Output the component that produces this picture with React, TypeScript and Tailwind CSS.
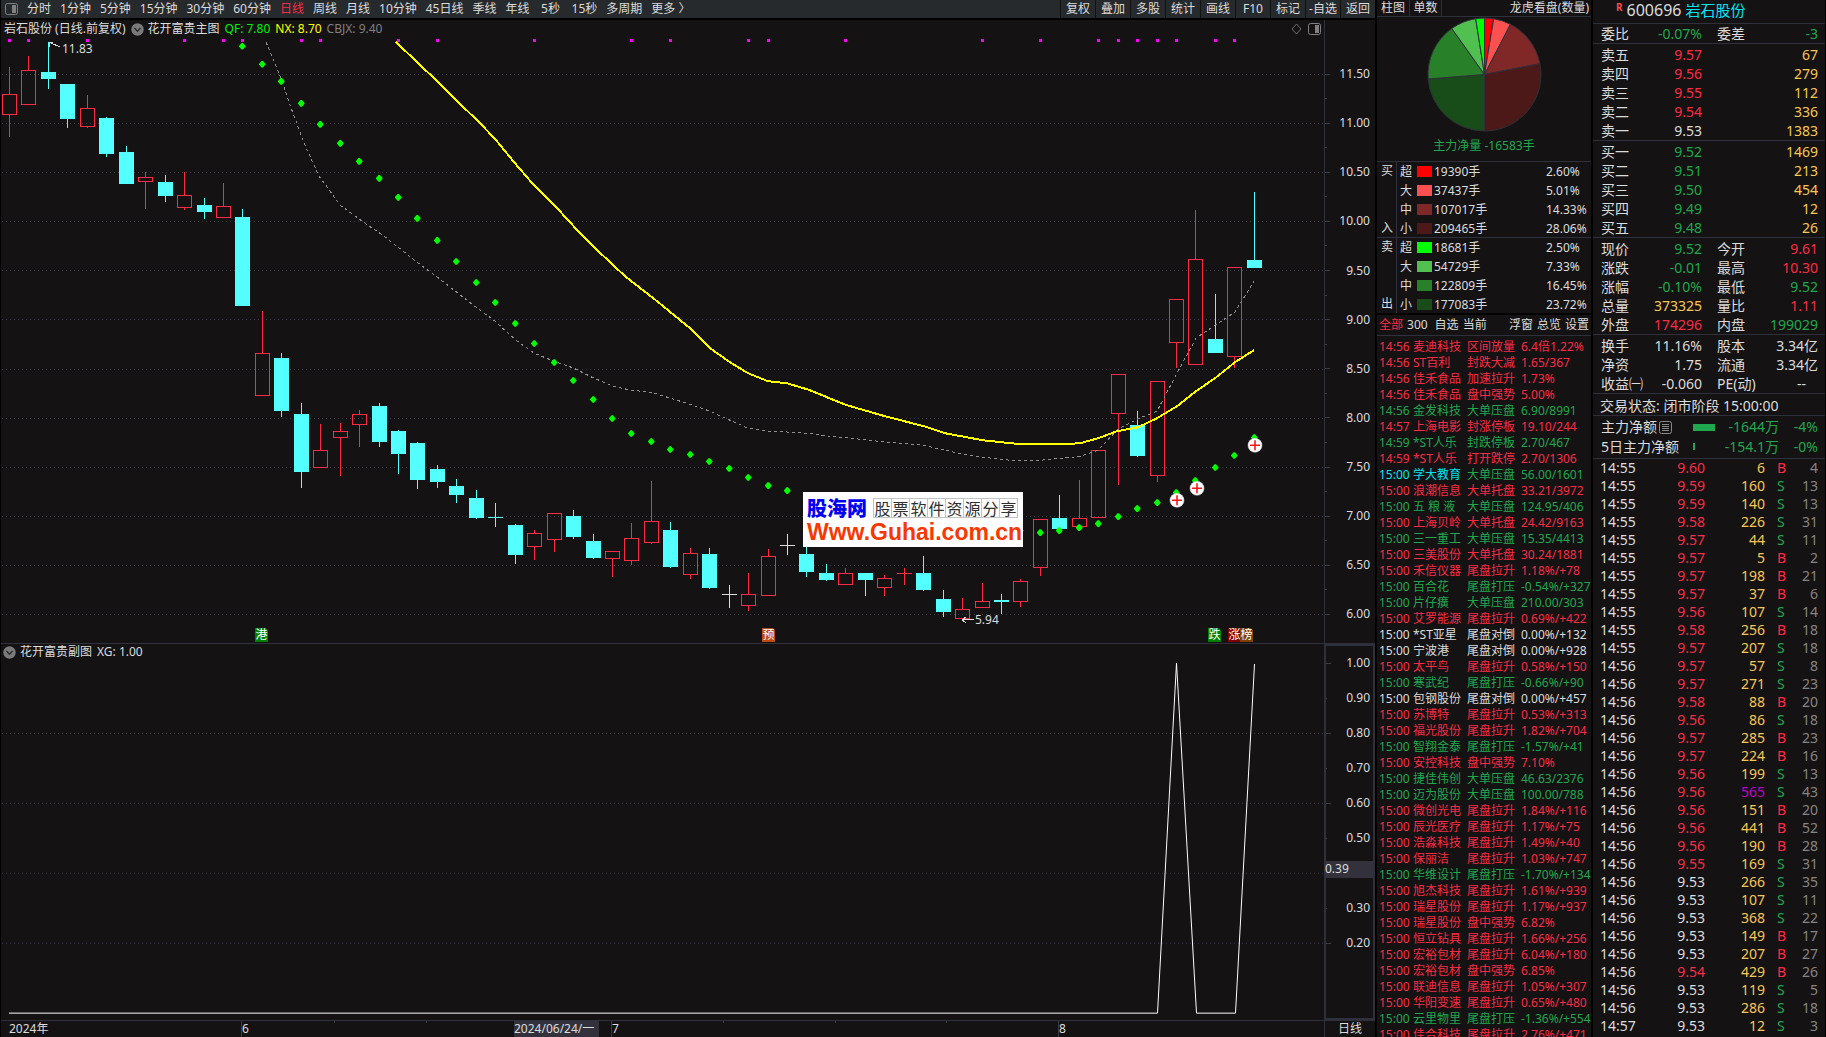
import { useState } from "react";
import { clsx } from "clsx";

type Tone = "r" | "g" | "w" | "y" | "c" | "m" | "n";

const TONES: Record<Tone, string> = {
  r: "text-[#fb2b46]",
  g: "text-[#1fa84f]",
  w: "text-[#dcdcdc]",
  y: "text-[#f8c850]",
  c: "text-[#00e4f4]",
  m: "text-[#c000c0]",
  n: "text-[#858585]",
};

const PERIODS = [
  "分时", "1分钟", "5分钟", "15分钟", "30分钟", "60分钟", "日线", "周线", "月线",
  "10分钟", "45日线", "季线", "年线", "5秒", "15秒", "多周期", "更多 〉",
];

const TOOLS = ["复权", "叠加", "多股", "统计", "画线", "F10", "标记", "-自选", "返回"];

// kind, high, body top, body bottom, low
type Candle = ["u" | "d" | "f", number, number, number, number];

const CANDLES: Candle[] = [
  ["u", 67, 94, 115, 137], ["u", 56, 70, 105, 105], ["d", 42, 72, 79, 89], ["d", 84, 84, 119, 128],
  ["u", 95, 108, 127, 128], ["d", 117, 118, 154, 157], ["d", 146, 152, 184, 184], ["u", 172, 177, 182, 209],
  ["d", 175, 182, 196, 202], ["u", 172, 195, 208, 210], ["d", 198, 205, 212, 219], ["u", 183, 206, 218, 218],
  ["d", 209, 217, 306, 306], ["u", 311, 353, 396, 396], ["d", 353, 358, 411, 417], ["d", 403, 414, 472, 488],
  ["u", 424, 450, 468, 468], ["u", 423, 431, 438, 476], ["u", 410, 414, 425, 447], ["d", 403, 406, 442, 447],
  ["d", 430, 431, 454, 474], ["d", 442, 443, 480, 489], ["d", 465, 469, 482, 488], ["d", 479, 486, 495, 503],
  ["d", 490, 498, 518, 519], ["d", 503, 517, 518, 527], ["d", 524, 525, 555, 564], ["u", 530, 533, 547, 560],
  ["u", 513, 513, 540, 552], ["d", 510, 516, 537, 539], ["d", 534, 541, 558, 559], ["u", 551, 551, 559, 577],
  ["u", 523, 538, 561, 565], ["u", 481, 521, 543, 544], ["d", 522, 530, 567, 568], ["u", 548, 553, 575, 579],
  ["d", 548, 554, 588, 589], ["f", 585, 594, 595, 608], ["u", 573, 594, 606, 611], ["u", 549, 556, 596, 596],
  ["f", 534, 545, 546, 555], ["d", 546, 554, 572, 577], ["d", 564, 573, 580, 581], ["u", 568, 573, 585, 585],
  ["d", 573, 573, 580, 596], ["u", 575, 578, 588, 596], ["u", 568, 573, 574, 585], ["d", 556, 573, 590, 591],
  ["d", 590, 599, 612, 617], ["u", 598, 609, 619, 619], ["u", 583, 601, 608, 608], ["d", 594, 600, 602, 614],
  ["u", 579, 581, 602, 607], ["u", 519, 519, 568, 576], ["d", 495, 518, 529, 529], ["u", 480, 518, 527, 527],
  ["u", 450, 450, 518, 518], ["u", 374, 374, 414, 485], ["d", 411, 425, 456, 457], ["u", 381, 381, 476, 482],
  ["u", 299, 299, 343, 368], ["u", 210, 259, 365, 365], ["d", 294, 339, 353, 353], ["u", 267, 267, 357, 368],
  ["d", 192, 260, 268, 268],
];

const SIGNALS = [0, 1, 4, 9, 11, 12, 15, 16, 20, 22, 27, 32, 34, 38, 39, 43, 50, 53, 56, 57, 58, 59, 60, 62, 63];

// QF dots, the first one sits on bar 12
const QF = [
  46, 64, 81, 103, 124, 143, 161, 178, 197, 218, 240, 261, 282, 302, 323, 343, 362, 380, 399, 418, 433, 441,
  449, 454, 461, 468, 477, 485, 490, 496, 501, 506, 511, 516, 520, 523, 526, 528, 529, 530, 530, 532, 530,
  527, 523, 516, 508, 502, 492, 480, 467, 455, 437,
];

const NX =
  "396,42 419,64 436,80 456,100 480,123 496,140 514,162 533,184 558,209 580,233 594,247 625,276 657,301 690,328 710,348 730,362 748,373 768,381 787,383 807,389 820,394 834,400 847,405 885,416 924,426 945,433 983,440 1021,444 1059,444 1080,443 1098,438 1117,431 1138,427 1157,418 1177,406 1196,391 1215,378 1235,362 1254,350";

const CBJX =
  "266,42 281,78 290,105 304,143 319,176 330,191 340,205 362,221 384,236 417,262 436,276 476,307 495,321 516,340 534,353 554,361 574,368 592,377 613,386 631,390 651,392 690,404 710,411 730,420 748,428 768,431 793,432 807,433 830,436 860,439 887,442 923,445 945,450 964,454 983,457 1010,460 1040,460 1063,458 1080,456 1098,450 1118,429 1137,419 1157,411 1177,373 1196,338 1215,325 1235,312 1254,281";

const PRICES = ["11.50", "11.00", "10.50", "10.00", "9.50", "9.00", "8.50", "8.00", "7.50", "7.00", "6.50", "6.00"];
const SUB_LEVELS = ["1.00", "0.90", "0.80", "0.70", "0.60", "0.50", "", "0.30", "0.20"];

const FLOWS = [
  { side: "买", end: "入", rows: [
    ["超", "#ff0000", "19390手", 2.6], ["大", "#ff5050", "37437手", 5.01],
    ["中", "#802828", "107017手", 14.33], ["小", "#4c1818", "209465手", 28.06],
  ] },
  { side: "卖", end: "出", rows: [
    ["超", "#00ff00", "18681手", 2.5], ["大", "#50c050", "54729手", 7.33],
    ["中", "#288028", "122809手", 16.45], ["小", "#184c18", "177083手", 23.72],
  ] },
] as { side: string; end: string; rows: [string, string, string, number][] }[];

const ALERTS: [string, string, string, string, Tone][] = [
  ["14:56", "麦迪科技", "区间放量", "6.4倍1.22%", "r"],
  ["14:56", "ST百利", "封跌大减", "1.65/367", "r"],
  ["14:56", "佳禾食品", "加速拉升", "1.73%", "r"],
  ["14:56", "佳禾食品", "盘中强势", "5.00%", "r"],
  ["14:56", "金发科技", "大单压盘", "6.90/8991", "g"],
  ["14:57", "上海电影", "封涨停板", "19.10/244", "r"],
  ["14:59", "*ST人乐", "封跌停板", "2.70/467", "g"],
  ["14:59", "*ST人乐", "打开跌停", "2.70/1306", "r"],
  ["15:00", "学大教育", "大单压盘", "56.00/1601", "g"],
  ["15:00", "浪潮信息", "大单托盘", "33.21/3972", "r"],
  ["15:00", "五 粮 液", "大单压盘", "124.95/406", "g"],
  ["15:00", "上海贝岭", "大单托盘", "24.42/9163", "r"],
  ["15:00", "三一重工", "大单压盘", "15.35/4413", "g"],
  ["15:00", "三美股份", "大单托盘", "30.24/1881", "r"],
  ["15:00", "禾信仪器", "尾盘拉升", "1.18%/+78", "r"],
  ["15:00", "百合花", "尾盘打压", "-0.54%/+327", "g"],
  ["15:00", "片仔癀", "大单压盘", "210.00/303", "g"],
  ["15:00", "艾罗能源", "尾盘拉升", "0.69%/+422", "r"],
  ["15:00", "*ST亚星", "尾盘对倒", "0.00%/+132", "w"],
  ["15:00", "宁波港", "尾盘对倒", "0.00%/+928", "w"],
  ["15:00", "太平鸟", "尾盘拉升", "0.58%/+150", "r"],
  ["15:00", "寒武纪", "尾盘打压", "-0.66%/+90", "g"],
  ["15:00", "包钢股份", "尾盘对倒", "0.00%/+457", "w"],
  ["15:00", "苏博特", "尾盘拉升", "0.53%/+313", "r"],
  ["15:00", "福光股份", "尾盘拉升", "1.82%/+704", "r"],
  ["15:00", "智翔金泰", "尾盘打压", "-1.57%/+41", "g"],
  ["15:00", "安控科技", "盘中强势", "7.10%", "r"],
  ["15:00", "捷佳伟创", "大单压盘", "46.63/2376", "g"],
  ["15:00", "迈为股份", "大单压盘", "100.00/788", "g"],
  ["15:00", "微创光电", "尾盘拉升", "1.84%/+116", "r"],
  ["15:00", "辰光医疗", "尾盘拉升", "1.17%/+75", "r"],
  ["15:00", "浩淼科技", "尾盘拉升", "1.49%/+40", "r"],
  ["15:00", "保丽洁", "尾盘拉升", "1.03%/+747", "r"],
  ["15:00", "华维设计", "尾盘打压", "-1.70%/+134", "g"],
  ["15:00", "旭杰科技", "尾盘拉升", "1.61%/+939", "r"],
  ["15:00", "瑞星股份", "尾盘拉升", "1.17%/+937", "r"],
  ["15:00", "瑞星股份", "盘中强势", "6.82%", "r"],
  ["15:00", "恒立钻具", "尾盘拉升", "1.66%/+256", "r"],
  ["15:00", "宏裕包材", "尾盘拉升", "6.04%/+180", "r"],
  ["15:00", "宏裕包材", "盘中强势", "6.85%", "r"],
  ["15:00", "联迪信息", "尾盘拉升", "1.05%/+307", "r"],
  ["15:00", "华阳变速", "尾盘拉升", "0.65%/+480", "r"],
  ["15:00", "云里物里", "尾盘打压", "-1.36%/+554", "g"],
  ["15:00", "佳合科技", "尾盘拉升", "2.76%/+471", "r"],
];

const ASKS: [string, string, Tone, string][] = [
  ["卖五", "9.57", "r", "67"], ["卖四", "9.56", "r", "279"], ["卖三", "9.55", "r", "112"],
  ["卖二", "9.54", "r", "336"], ["卖一", "9.53", "w", "1383"],
];
const BIDS: [string, string, Tone, string][] = [
  ["买一", "9.52", "g", "1469"], ["买二", "9.51", "g", "213"], ["买三", "9.50", "g", "454"],
  ["买四", "9.49", "g", "12"], ["买五", "9.48", "g", "26"],
];

const RATIO: [string, string, Tone][] = [["委比", "-0.07%", "g"], ["委差", "-3", "g"]];
const QUOTE: [string, string, Tone][] = [
  ["现价", "9.52", "g"], ["今开", "9.61", "r"],
  ["涨跌", "-0.01", "g"], ["最高", "10.30", "r"],
  ["涨幅", "-0.10%", "g"], ["最低", "9.52", "g"],
  ["总量", "373325", "y"], ["量比", "1.11", "r"],
  ["外盘", "174296", "r"], ["内盘", "199029", "g"],
];
const BASICS: [string, string, Tone][] = [
  ["换手", "11.16%", "w"], ["股本", "3.34亿", "w"],
  ["净资", "1.75", "w"], ["流通", "3.34亿", "w"],
  ["收益㈠", "-0.060", "w"], ["PE(动)", "--", "w"],
];

const TICKS: [string, string, number, "B" | "S", number][] = [
  ["14:55", "9.60", 6, "B", 4], ["14:55", "9.59", 160, "S", 13], ["14:55", "9.59", 140, "S", 13],
  ["14:55", "9.58", 226, "S", 31], ["14:55", "9.57", 44, "S", 11], ["14:55", "9.57", 5, "B", 2],
  ["14:55", "9.57", 198, "B", 21], ["14:55", "9.57", 37, "B", 6], ["14:55", "9.56", 107, "S", 14],
  ["14:55", "9.58", 256, "B", 18], ["14:55", "9.57", 207, "S", 18], ["14:56", "9.57", 57, "S", 8],
  ["14:56", "9.57", 271, "S", 23], ["14:56", "9.58", 88, "B", 20], ["14:56", "9.56", 86, "S", 18],
  ["14:56", "9.57", 285, "B", 23], ["14:56", "9.57", 224, "B", 16], ["14:56", "9.56", 199, "S", 13],
  ["14:56", "9.56", 565, "S", 43], ["14:56", "9.56", 151, "B", 20], ["14:56", "9.56", 441, "B", 52],
  ["14:56", "9.56", 190, "B", 28], ["14:56", "9.55", 169, "S", 31], ["14:56", "9.53", 266, "S", 35],
  ["14:56", "9.53", 107, "S", 11], ["14:56", "9.53", 368, "S", 22], ["14:56", "9.53", 149, "B", 17],
  ["14:56", "9.53", 207, "B", 27], ["14:56", "9.54", 429, "B", 26], ["14:56", "9.53", 119, "S", 5],
  ["14:56", "9.53", 286, "S", 18], ["14:57", "9.53", 12, "S", 3],
];

const PLOT_W = 1323;
const MAIN_TOP = 38;
const MAIN_H = 605;

const barX = (i: number) => Math.round(9 + 19.45 * i);
const left = (x: number) => `${((x - 1) / PLOT_W) * 100}%`;
const top = (y: number) => `${((y - MAIN_TOP) / MAIN_H) * 100}%`;

function PanelIcon() {
  return (
    <svg width="13" height="12" viewBox="0 0 13 12" fill="none">
      <rect x="0.5" y="0.5" width="12" height="11" rx="2" stroke="#808080" />
      <rect x="7" y="2" width="4" height="8" fill="#808080" />
    </svg>
  );
}

function CollapseIcon() {
  return (
    <svg width="13" height="13" viewBox="0 0 13 13" fill="none">
      <circle cx="6.5" cy="6.5" r="6.2" fill="#7a7a7a" />
      <path d="M3.5 5 6.5 8.2 9.5 5" stroke="#2a2a2a" strokeWidth="1.3" />
    </svg>
  );
}

function Toolbar() {
  const [active, setActive] = useState("日线");
  return (
    <nav className="flex h-[18px] shrink-0 items-center justify-between overflow-hidden bg-[#272a2c] leading-[18px]">
      <div className="flex items-center gap-[9px] pl-1 whitespace-nowrap">
        <button aria-label="侧栏"><PanelIcon /></button>
        {PERIODS.map((p) => (
          <button key={p} onClick={() => setActive(p)} className={clsx("min-w-6", p === active ? TONES.r : TONES.w)}>
            {p}
          </button>
        ))}
      </div>
      <div className="flex">
        {TOOLS.map((t) => (
          <button key={t} className="w-[35px] border-l border-[#121212] text-center whitespace-nowrap">{t}</button>
        ))}
      </div>
    </nav>
  );
}

function CandleBar({ candle, index }: { candle: Candle; index: number }) {
  const [kind, hi, bodyTop, bodyBottom, lo] = candle;
  const x = barX(index);
  const color = kind === "u" ? "#fb2b46" : kind === "d" ? "#54ffff" : "#dcdcdc";
  const hollow = kind === "u" && bodyBottom - bodyTop > 1;
  return (
    <g fill={color}>
      <rect x={x} y={hi} width="1" height={bodyTop - hi} />
      <rect x={x} y={bodyBottom} width="1" height={lo - bodyBottom} />
      {hollow ? (
        <rect x={x - 6.5} y={bodyTop + 0.5} width="14" height={bodyBottom - bodyTop - 1} fill="none" stroke={color} />
      ) : (
        <rect x={x - 7} y={bodyTop} width="15" height={bodyBottom - bodyTop} />
      )}
    </g>
  );
}

function Watermark() {
  return (
    <div
      className="absolute flex h-[55px] w-[220px] flex-col justify-center bg-white pl-1"
      style={{ left: left(803), top: top(492) }}
    >
      <div className="flex h-6 items-center gap-1.5">
        <span className="font-['Noto_Sans_CJK_SC',sans-serif] text-[20px] leading-6 font-black text-[#0000f0]">股海网</span>
        <span className="flex border-y border-l border-[#c4c4c4] font-['Noto_Sans_CJK_SC',sans-serif] text-[16px] leading-[18px] text-[#303030]">
          {"股票软件资源分享".split("").map((ch) => (
            <span key={ch} className="w-[18px] border-r border-[#c4c4c4] text-center">{ch}</span>
          ))}
        </span>
      </div>
      <a href="#" className="font-['Liberation_Sans',sans-serif] text-[23px] leading-6 font-bold text-[#f83800]">
        Www.Guhai.com.cn
      </a>
    </div>
  );
}

function Badge({ x, className, children }: { x: number; className: string; children: string }) {
  return (
    <span
      className={clsx("absolute bottom-px h-[14px] w-[13px] rounded-tr-sm text-center leading-[14px] text-white", className)}
      style={{ left: left(x) }}
    >
      {children}
    </span>
  );
}

function MainChart() {
  return (
    <section className="flex min-h-0 flex-[624_1_0%] border-b border-[#2e303b] bg-[#141213]">
      <div className="flex min-w-0 flex-1 flex-col">
        <header className="flex h-[18px] shrink-0 items-center gap-1 pr-[3px] pl-[3px] leading-[18px] whitespace-nowrap">
          <span>岩石股份 (日线.前复权)</span>
          <button aria-label="收起" className="ml-px"><CollapseIcon /></button>
          <span>花开富贵主图</span>
          <span className="ml-px text-[#00f000]">QF: 7.80</span>
          <span className="ml-px text-[#ffff00]">NX: 8.70</span>
          <span className="ml-px text-[#808080]">CBJX: 9.40</span>
          <span className="ml-auto flex items-center gap-1.5">
            <svg width="11" height="12" viewBox="0 0 11 12" fill="none">
              <path d="M5.5 1 10 6 5.5 11 1 6Z" stroke="#707070" />
            </svg>
            <PanelIcon />
          </span>
        </header>
        <div className="relative min-h-0 flex-1">
          <svg
            className="absolute inset-0 h-full w-full"
            viewBox={`1 ${MAIN_TOP} ${PLOT_W} ${MAIN_H}`}
            preserveAspectRatio="none"
            shapeRendering="crispEdges"
          >
            {PRICES.map((p, i) => {
              const y = Math.round(74 + i * 49.09) + 0.5;
              return <line key={p} x1="2" x2="1324" y1={y} y2={y} stroke="#3c3c44" strokeDasharray="1 3" />;
            })}
            {SIGNALS.map((i) => (
              <rect key={i} x={barX(i) - 1} y="39" width="3" height="3" fill="#ff00ff" />
            ))}
            {CANDLES.map((c, i) => <CandleBar key={i} candle={c} index={i} />)}
            <polyline points={CBJX} fill="none" stroke="#909090" strokeDasharray="3 3" />
            <polyline points={NX} fill="none" stroke="#ffff00" strokeWidth="2" />
            <g fill="#00ff00" shapeRendering="auto">
              {QF.map((y, i) => (
                <path key={i} d={`M${barX(i + 12) - 3} ${y}l2.5-3h1.5l2.5 3v.6l-2.5 3h-1.5l-2.5-3z`} />
              ))}
            </g>
            <g shapeRendering="auto">
              {[[1177, 500], [1197, 488], [1255, 445]].map(([x, y]) => (
                <g key={x}>
                  <circle cx={x} cy={y} r="7" fill="#fff" stroke="#c8c8c8" strokeWidth="0.6" />
                  <path d={`M${x - 5} ${y}h10M${x} ${y - 5}v10`} stroke="#ff1414" strokeWidth="1.6" />
                </g>
              ))}
            </g>
            <path d="M49 42l11 5M49 42v5M49 42h4" stroke="#dcdcdc" fill="none" />
            <path d="M962 619.5h12M962 619.5l4-3M962 619.5l4 3" stroke="#dcdcdc" fill="none" />
          </svg>
          <span className="absolute leading-4" style={{ left: left(62), top: top(41) }}>11.83</span>
          <span className="absolute leading-4" style={{ left: left(975), top: top(612) }}>5.94</span>
          <Badge x={255} className="bg-[#008000]">港</Badge>
          <Badge x={762} className="bg-[#c04810]">预</Badge>
          <Badge x={1208} className="bg-[#008000]">跌</Badge>
          <Badge x={1228} className="bg-[#800000]">涨</Badge>
          <Badge x={1240} className="bg-[#804000]">榜</Badge>
          <Watermark />
        </div>
      </div>
      <div className="flex w-[51px] shrink-0 flex-col justify-between border-l border-[#2e303b] pt-[46px] pr-[5px] pb-[21px]">
        {PRICES.flatMap((p, i) => (i ? ["", p] : [p])).map((label, i) => (
          <div key={i} className="flex h-4 items-center justify-between">
            <i className={clsx("h-px bg-[#3a3c46]", label ? "w-[5px]" : "w-0.5")} />
            <span className="leading-4">{label}</span>
          </div>
        ))}
      </div>
    </section>
  );
}

function SubChart() {
  return (
    <section className="flex min-h-0 flex-[376_1_0%] bg-[#141213]">
      <div className="flex min-w-0 flex-1 flex-col">
        <header className="flex h-4 shrink-0 items-center gap-1 pl-0.5 leading-4">
          <button aria-label="收起"><CollapseIcon /></button>
          <span>花开富贵副图</span>
          <span className="ml-px">XG: 1.00</span>
        </header>
        <div className="relative min-h-0 flex-1">
          <svg
            className="absolute inset-0 h-full w-full"
            viewBox={`1 660 ${PLOT_W} 360`}
            preserveAspectRatio="none"
            shapeRendering="crispEdges"
          >
            {[733, 803, 873, 943].map((y) => (
              <line key={y} x1="2" x2="1324" y1={y + 0.5} y2={y + 0.5} stroke="#3c3c44" strokeDasharray="1 3" />
            ))}
            <polyline
              points="9,1013.5 1157.5,1013.5 1176.5,663 1196.5,1013.5 1235.5,1013.5 1254.5,664"
              fill="none"
              stroke="#ffffff"
            />
          </svg>
        </div>
      </div>
      <div className="relative flex w-[51px] shrink-0 flex-col justify-between border-2 border-[#2e303b] pt-[9px] pr-[3px] pb-[67px]">
        {SUB_LEVELS.map((label, i) => (
          <div key={i} className="flex h-4 items-center justify-between">
            <i className={clsx("h-px bg-[#3a3c46]", i % 2 ? "w-px" : "w-[5px]")} />
            <span className="leading-4">{label}</span>
          </div>
        ))}
        <span className="absolute right-0 bottom-[140px] -left-px h-[17px] bg-[#33323c] leading-4">0.39</span>
      </div>
    </section>
  );
}

function TimeAxis() {
  return (
    <footer className="flex h-[17px] shrink-0 border-t border-[#2e303b] bg-[#141213] leading-4">
      <div className="relative flex-1 overflow-hidden">
        <span className="absolute" style={{ left: left(9) }}>2024年</span>
        {[334, 426, 723, 835, 946].map((x) => (
          <i key={x} className="absolute top-0 h-0.5 w-px bg-[#3a3c46]" style={{ left: left(x) }} />
        ))}
        {([[241, "6"], [611, "7"], [1058, "8"]] as [number, string][]).map(([x, month]) => (
          <span key={month} className="absolute border-l border-[#3a3c46]" style={{ left: left(x) }}>{month}</span>
        ))}
        <span className="absolute w-[85px] bg-[#33323c] whitespace-nowrap" style={{ left: left(514) }}>2024/06/24/一</span>
      </div>
      <button className="w-[51px] border-l border-[#2e303b] text-center">日线</button>
    </footer>
  );
}

function FlowPie() {
  const slices = [...FLOWS[0].rows, ...[...FLOWS[1].rows].reverse()];
  let sum = 0;
  const at = (v: number) => {
    const a = (v / 100) * Math.PI * 2;
    return `${57.5 + 56.5 * Math.sin(a)} ${57.5 - 56.5 * Math.cos(a)}`;
  };
  return (
    <svg width="115" height="115" viewBox="0 0 115 115" className="mx-auto">
      {slices.map(([, color, label, pct]) => {
        const from = sum;
        sum += pct;
        return (
          <path key={label} d={`M57.5 57.5L${at(from)}A56.5 56.5 0 0 1 ${at(sum)}Z`} fill={color} stroke="#2e303b" />
        );
      })}
    </svg>
  );
}

function FlowPanel() {
  return (
    <section className="shrink-0 bg-[#141213]">
      <header className="flex h-[17px] items-center justify-between border-b border-[#2e303b] pr-0.5 leading-4">
        <div className="flex">
          <button className="w-[33px] border-r border-[#2e303b] text-center">柱图</button>
          <button className="w-8 border-r border-[#2e303b] text-center">单数</button>
        </div>
        <span>龙虎看盘(数量)</span>
      </header>
      <FlowPie />
      <p className={clsx("h-[29px] pt-1 text-center leading-5", TONES.g)}>主力净量 -16583手</p>
      {FLOWS.map((f) => (
        <div key={f.side} className="flex h-[76px] border-t border-[#2e303b]">
          <div className="flex w-5 flex-col justify-between border-r border-[#2e303b] pl-1 leading-[18px]">
            <span>{f.side}</span>
            <span>{f.end}</span>
          </div>
          <table className="flex-1 table-fixed leading-[18px]">
            <tbody>
              {f.rows.map(([size, color, amount, pct]) => (
                <tr key={size} className="h-[19px]">
                  <td className="w-5 p-0 pl-[3px]">{size}</td>
                  <td className="w-[17px] p-0">
                    <i className="block h-[11px] w-[15px]" style={{ backgroundColor: color }} />
                  </td>
                  <td className="p-0">{amount}</td>
                  <td className="w-[45px] p-0">{pct.toFixed(2)}%</td>
                </tr>
              ))}
            </tbody>
          </table>
        </div>
      ))}
    </section>
  );
}

function AlertPanel() {
  return (
    <section className="min-h-0 flex-1 overflow-hidden bg-[#141213]">
      <header className="mb-[3px] flex h-[21px] items-center justify-between border-b border-[#2e303b] px-0.5 leading-5">
        <div className="flex gap-1">
          <button className={TONES.r}>全部</button>
          <button className="mr-[3px]">300</button>
          <button>自选</button>
          <button>当前</button>
        </div>
        <div className="flex gap-1">
          <button>浮窗</button>
          <button>总览</button>
          <button>设置</button>
        </div>
      </header>
      <table className="w-full table-fixed leading-4 whitespace-nowrap">
        <tbody>
          {ALERTS.map(([time, name, event, value, tone], i) => (
            <tr key={i} className={clsx("h-4", TONES[tone])}>
              <td className={clsx("w-9 p-0 pl-0.5", name === "学大教育" && TONES.c)}>{time}</td>
              <td className={clsx("w-[54px] p-0", name === "学大教育" && TONES.c)}>{name}</td>
              <td className="w-[54px] p-0">{event}</td>
              <td className="overflow-hidden p-0">{value}</td>
            </tr>
          ))}
        </tbody>
      </table>
    </section>
  );
}

function PairGrid({ items }: { items: [string, string, Tone][] }) {
  return (
    <dl className="grid grid-cols-2 gap-x-[15px] border-b border-[#2e303b] pr-[7px] pl-2">
      {items.map(([label, value, tone]) => (
        <div key={label} className="flex h-[19px] justify-between leading-[19px]">
          <dt>{label}</dt>
          <dd className={clsx(TONES[tone], value === "--" && "pr-3")}>{value}</dd>
        </div>
      ))}
    </dl>
  );
}

function DepthTable({ rows }: { rows: [string, string, Tone, string][] }) {
  return (
    <div className="border-b border-[#2e303b] pt-px pr-[7px] pl-2">
      <table className="w-full table-fixed leading-[19px]">
        <tbody>
          {rows.map(([label, price, tone, volume]) => (
            <tr key={label} className="h-[19px]">
              <td className="w-10 p-0">{label}</td>
              <td className={clsx("w-[61px] p-0 text-right", TONES[tone])}>{price}</td>
              <td className={clsx("p-0 text-right", TONES.y)}>{volume}</td>
            </tr>
          ))}
        </tbody>
      </table>
    </div>
  );
}

function QuotePanel() {
  return (
    <aside className="flex w-[232px] shrink-0 flex-col overflow-hidden bg-[#141213] text-[14px]">
      <h1 className="flex h-6 shrink-0 items-start border-b border-[#2e303b] pl-[23px] text-[16px] leading-5">
        <sup className="top-0 mr-1 text-[10px] leading-[14px] font-bold text-[#fb4a4a]">R</sup>
        <span className="mr-1">600696</span>
        <span className={clsx("text-[15px]", TONES.c)}>岩石股份</span>
      </h1>
      <PairGrid items={RATIO} />
      <DepthTable rows={ASKS} />
      <DepthTable rows={BIDS} />
      <div className="pt-px"><PairGrid items={QUOTE} /></div>
      <div className="pt-px"><PairGrid items={BASICS} /></div>
      <p className="mt-0.5 h-5 border-b border-[#2e303b] pl-[7px] leading-5">交易状态: 闭市阶段 15:00:00</p>
      <div className="shrink-0 border-b border-[#2e303b] pt-px pr-[7px] pb-0.5 pl-2 leading-5">
        <div className="flex h-5 items-center">
          <span className="mr-0.5">主力净额</span>
          <svg width="13" height="13" viewBox="0 0 13 13" fill="none" stroke="#8a8a8a">
            <rect x="0.5" y="0.5" width="12" height="12" rx="2" />
            <path d="M3 3.5h7M3 5.5h7M3 7.5h7M3 9.5h7" />
          </svg>
          <i className="ml-[21px] h-[7px] w-[22px] bg-[#1fa84f]" />
          <span className={clsx("ml-auto", TONES.g)}>-1644万</span>
          <span className={clsx("w-[39px] text-right", TONES.g)}>-4%</span>
        </div>
        <div className="flex h-[19px] items-center">
          <span className="w-[92px]">5日主力净额</span>
          <i className="h-[7px] w-0.5 bg-[#1fa84f]" />
          <span className={clsx("ml-auto", TONES.g)}>-154.1万</span>
          <span className={clsx("w-[39px] text-right", TONES.g)}>-0%</span>
        </div>
      </div>
      <div className="px-[7px]">
        <table className="w-full table-fixed leading-[18px]">
          <tbody>
            {TICKS.map(([time, price, volume, side, count], i) => (
              <tr key={i} className="h-[18px]">
                <td className="w-[45px] p-0">{time}</td>
                <td className={clsx("w-[60px] p-0 text-right", price === "9.53" ? TONES.w : TONES.r)}>{price}</td>
                <td className={clsx("w-[60px] p-0 text-right", volume > 500 ? TONES.m : TONES.y)}>{volume}</td>
                <td className={clsx("w-[21px] p-0 pl-3", side === "B" ? TONES.r : TONES.g)}>{side}</td>
                <td className={clsx("p-0 text-right", TONES.n)}>{count}</td>
              </tr>
            ))}
          </tbody>
        </table>
      </div>
    </aside>
  );
}

export default function App() {
  return (
    <main className="flex h-screen gap-0.5 overflow-hidden bg-black px-px font-['Noto_Sans','Noto_Sans_CJK_SC',sans-serif] text-[12px] text-[#dcdcdc]">
      <div className="flex min-w-0 flex-1 flex-col">
        <Toolbar />
        <div className="h-0.5 shrink-0" />
        <MainChart />
        <SubChart />
        <TimeAxis />
      </div>
      <div className="flex w-[214px] shrink-0 flex-col gap-0.5 overflow-hidden">
        <FlowPanel />
        <AlertPanel />
      </div>
      <QuotePanel />
    </main>
  );
}
